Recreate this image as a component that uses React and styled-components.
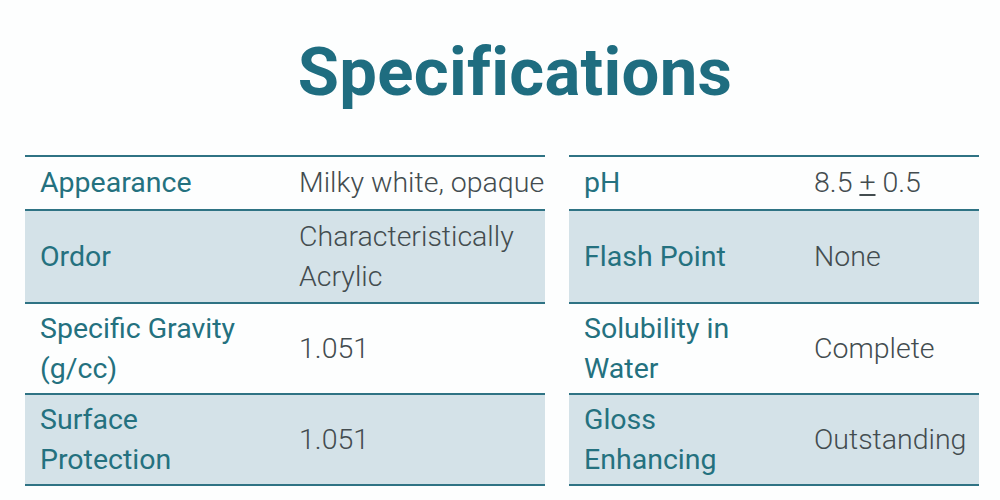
import React from "react";
import styled, { createGlobalStyle } from "styled-components";

const Global = createGlobalStyle`
  html, body { margin: 0; padding: 0; background: #fdfefe; }
  body { width: 1000px; height: 500px; overflow: hidden; }
`;

const Page = styled.div`
  width: 1000px;
  height: 500px;
  overflow: hidden;
  box-sizing: border-box;
  padding: 0 21px 0 25px;
`;

const Title = styled.h1`
  margin: 0;
  height: 155px;
  box-sizing: border-box;
  padding: 31px 0 0 26px;
  text-align: center;
  font-family: "Roboto", "Liberation Sans", sans-serif;
  font-weight: 700;
  font-size: 67px;
  line-height: 82px;
  letter-spacing: 0.3px;
  color: #1f6d80;
`;

const Columns = styled.div`
  display: grid;
  grid-template-columns: 520px 410px;
  column-gap: 24px;
  align-items: start;
`;

const Table = styled.div`
  display: flex;
  flex-direction: column;
  border-top: 2px solid #2f7384;
`;

const Row = styled.div`
  display: grid;
  grid-template-columns: ${(p) => p.$labelCol}px 1fr;
  align-items: center;
  height: ${(p) => p.$h}px;
  box-sizing: border-box;
  border-bottom: 2px solid #2f7384;
  background: ${(p) => (p.$shade ? "#d4e2e8" : "transparent")};
  padding-left: 15px;
`;

const Label = styled.div`
  font-family: "Roboto", "Liberation Sans", sans-serif;
  font-size: 28.5px;
  line-height: 40px;
  color: #24717f;
  padding-right: 6px;
  white-space: pre-line;
`;

const Value = styled.div`
  font-family: "Roboto", "Liberation Sans", sans-serif;
  font-weight: 300;
  font-size: 28.5px;
  line-height: 40px;
  color: #434c4f;
  white-space: pre-line;
`;

const Pm = styled.span`
  text-decoration: underline;
  text-underline-offset: 2px;
`;

const heights = [54, 93, 91, 91, 140];

const left = [
  ["Appearance", "Milky white, opaque"],
  ["Ordor", "Characteristically\nAcrylic"],
  ["Specific Gravity\n(g/cc)", "1.051"],
  ["Surface\nProtection", "1.051"],
];

const right = [
  ["pH", <>8.5 <Pm>+</Pm> 0.5</>],
  ["Flash Point", "None"],
  ["Solubility in\nWater", "Complete"],
  ["Gloss\nEnhancing", "Outstanding"],
  ["Shelf Life", "At room temp\n1 year"],
];

function SpecTable({ rows, labelCol }) {
  return (
    <Table>
      {rows.map(([k, v], i) => (
        <Row key={i} $h={heights[i]} $shade={i % 2 === 1} $labelCol={labelCol}>
          <Label>{k}</Label>
          <Value>{v}</Value>
        </Row>
      ))}
    </Table>
  );
}

export default function App() {
  return (
    <>
      <Global />
      <Page>
        <Title>Specifications</Title>
        <Columns>
          <SpecTable rows={left} labelCol={259} />
          <SpecTable rows={right} labelCol={230} />
        </Columns>
      </Page>
    </>
  );
}
